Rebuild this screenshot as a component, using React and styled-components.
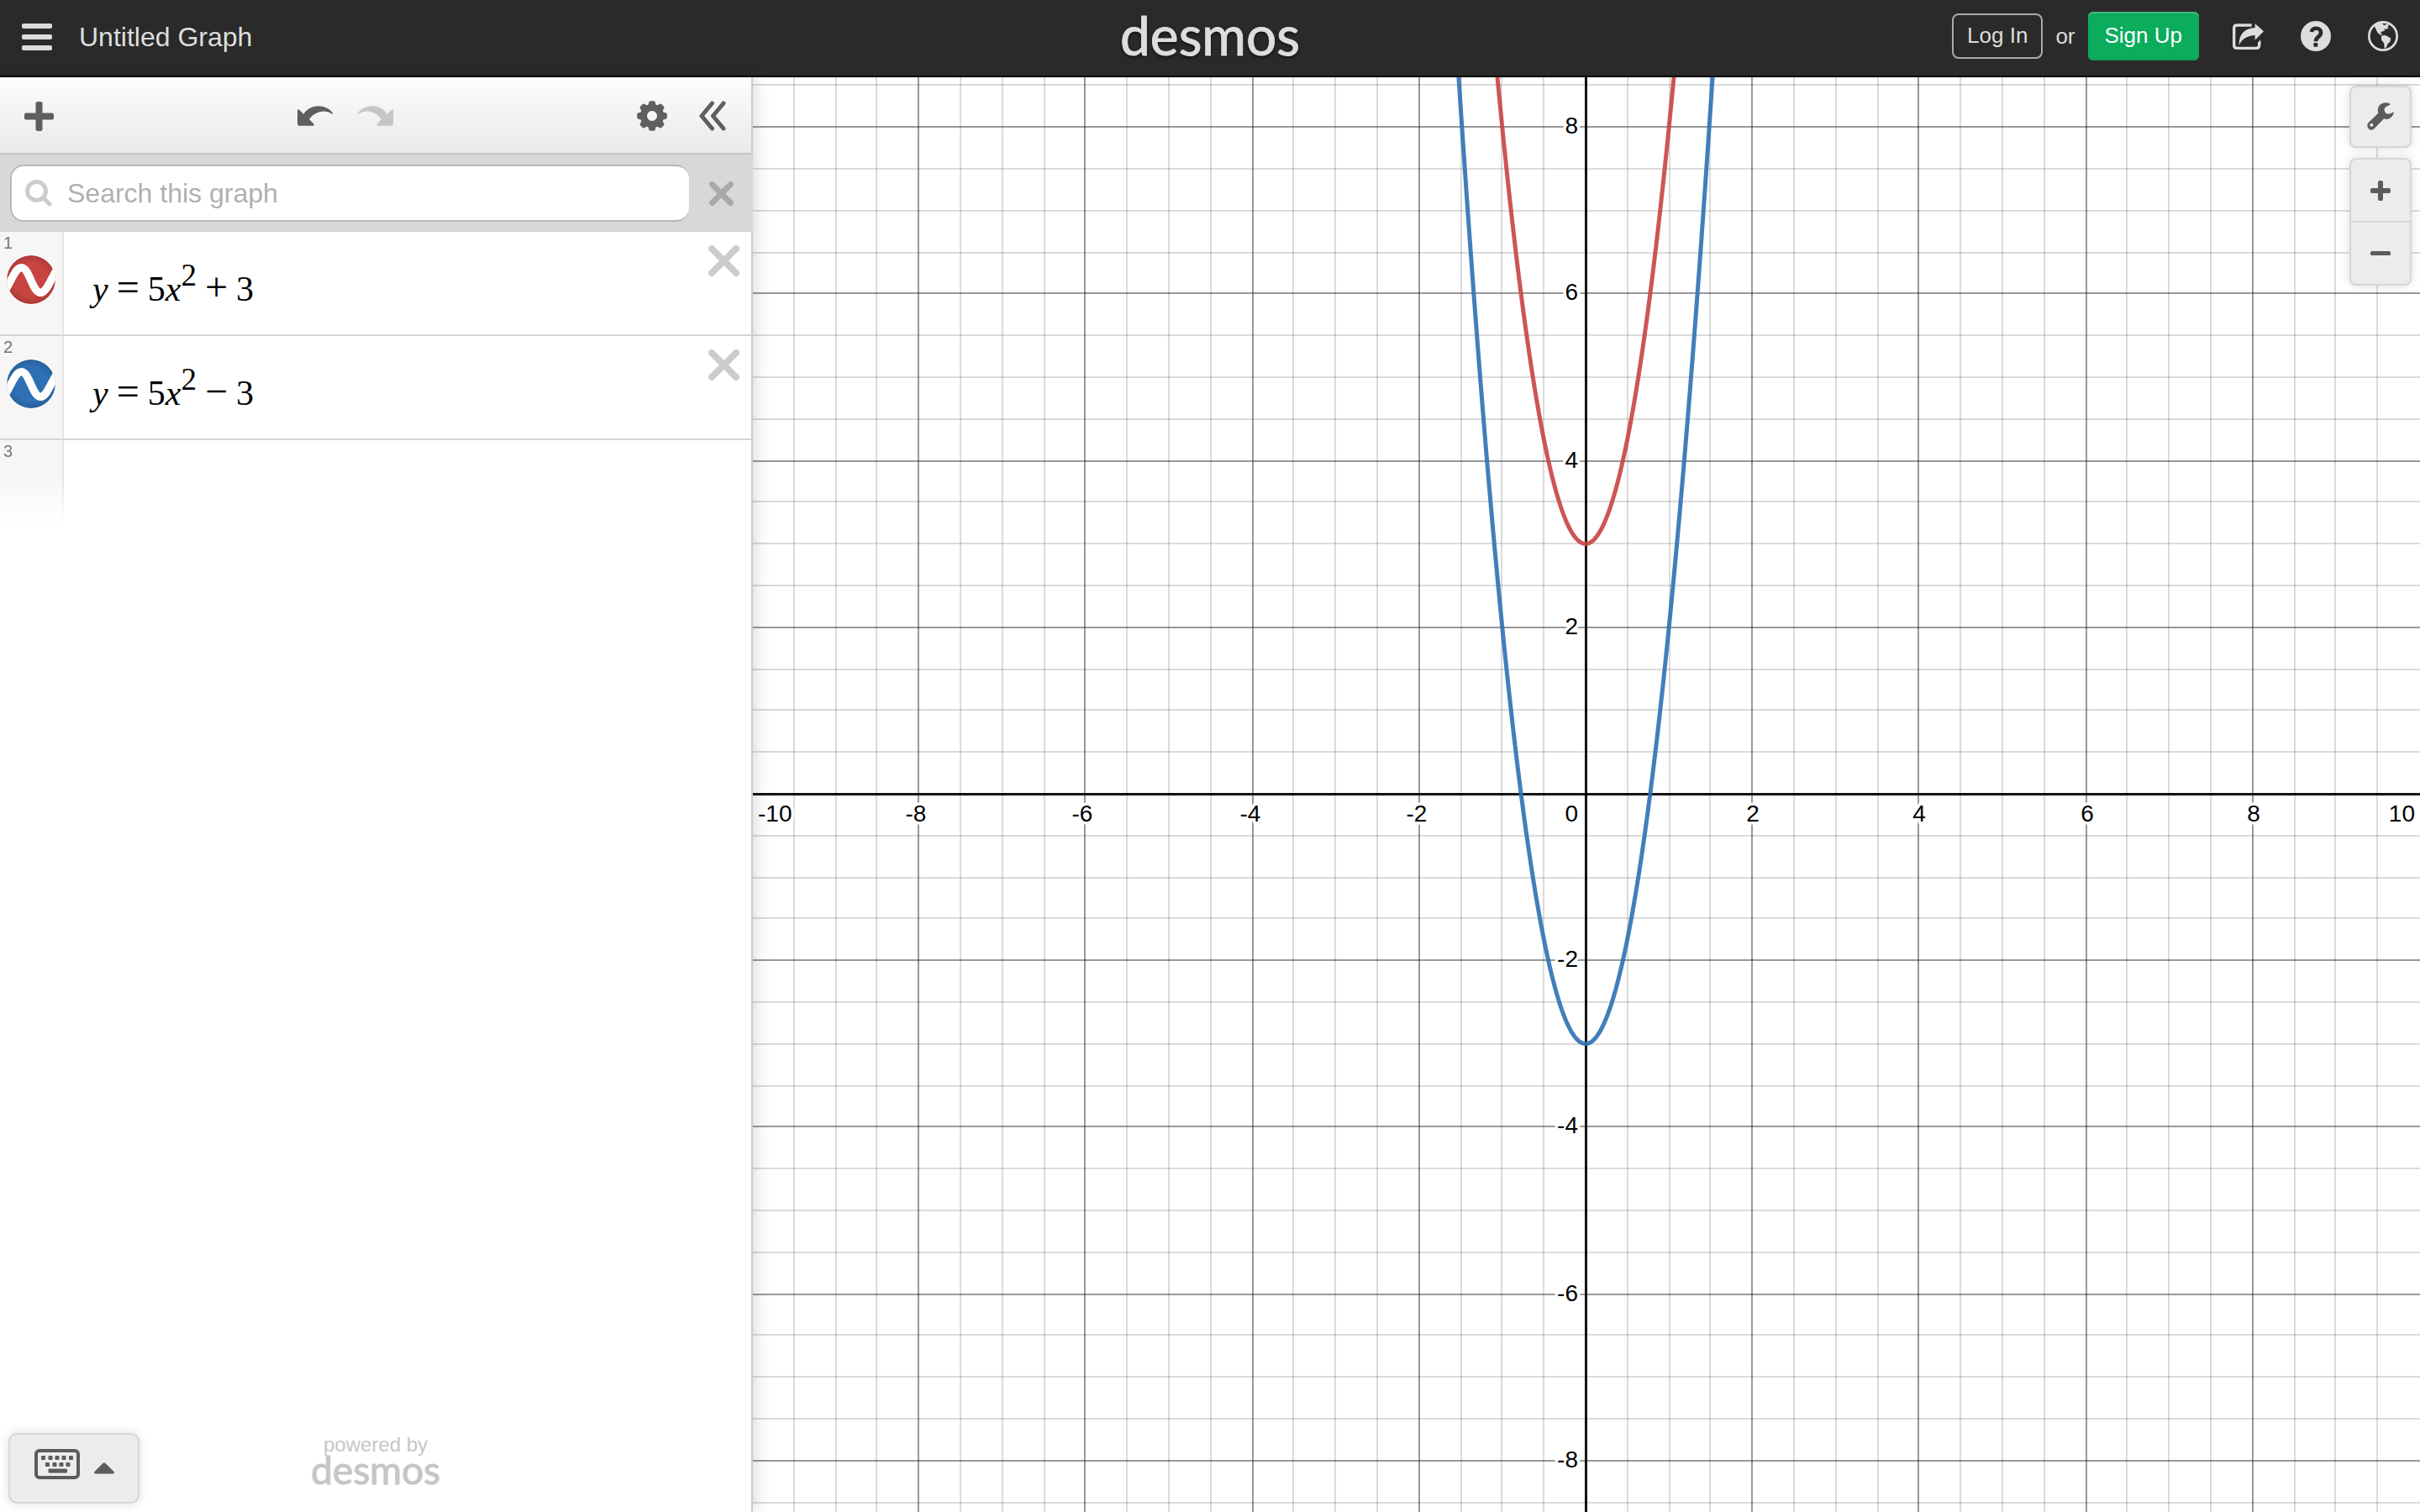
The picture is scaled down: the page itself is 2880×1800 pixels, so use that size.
import React, { useLayoutEffect, useRef, useState } from "react";
import styled, { createGlobalStyle, css } from "styled-components";

const GlobalStyle = createGlobalStyle`
  *, *::before, *::after { box-sizing: border-box; }
  body {
    margin: 0;
    background: #fff;
    font-family: "Liberation Sans", Arial, sans-serif;
  }
  button {
    margin: 0;
    padding: 0;
    border: 0;
    background: none;
    font: inherit;
    color: inherit;
    cursor: pointer;
  }
`;

const Page = styled.div`
  display: flex;
  flex-direction: column;
  height: 100vh;
  overflow: hidden;
`;

/* ---------- header ---------- */

const Header = styled.header`
  flex: none;
  display: grid;
  grid-template-columns: 1fr auto 1fr;
  align-items: center;
  height: 92px;
  padding: 0 26px;
  border-bottom: 2px solid #000;
  background: #2a2a2a;
  color: #ddd;
`;

const HeaderStart = styled.div`
  display: flex;
  align-items: center;
  gap: 32px;
  padding-bottom: 2px;
`;

const HeaderEnd = styled.div`
  display: flex;
  align-items: center;
  justify-content: flex-end;
  gap: 44px;
  padding-bottom: 4px;
`;

const GraphTitle = styled.h1`
  margin: 0;
  font-size: 32px;
  font-weight: 400;
  line-height: 40px;
`;

const Wordmark = styled.span`
  font-family: Lato, "Open Sans", sans-serif;
  font-weight: 400;
  ${(p) =>
    p.$large
      ? css`
          font-size: 64px;
          line-height: 64px;
          height: 70px;
          color: #ddd;
          -webkit-text-stroke: 1px #ddd;
          text-shadow: 0 2px 4px rgba(0, 0, 0, 0.7);
        `
      : css`
          font-size: 46px;
          line-height: 32px;
          color: #c6c6c6;
          -webkit-text-stroke: 1px #c6c6c6;
        `}
`;

const Account = styled.div`
  display: flex;
  align-items: center;
  gap: 15px;
  margin-right: -4px;
  font-size: 26px;
`;

const LogInButton = styled.button`
  height: 54px;
  padding: 0 16px 2px;
  border: 2px solid #aaa;
  border-radius: 8px;
`;

const SignUpButton = styled.button`
  height: 58px;
  padding: 0 20px 2px;
  border-radius: 6px;
  background: #0bac5c;
  box-shadow: inset 0 2px 0 #41b87c, inset 0 -2px 0 #109c57;
  color: #fff;
`;

const IconButton = styled.button`
  display: flex;
  align-items: center;
  justify-content: center;
`;

/* ---------- expression panel ---------- */

const Main = styled.main`
  flex: 1;
  display: flex;
  min-height: 0;
`;

const Panel = styled.section`
  position: relative;
  z-index: 1;
  flex: none;
  display: flex;
  flex-direction: column;
  width: 896px;
  border-right: 2px solid #ccc;
  background: #fff;
  box-shadow: 0 0 20px rgba(0, 0, 0, 0.2);
`;

const Toolbar = styled.div`
  display: flex;
  justify-content: space-between;
  height: 92px;
  padding: 2px 10px 0;
  border-bottom: 2px solid #c6c6c6;
  background: linear-gradient(#fcfcfc, #eaeaea);
  color: #5f5f5f;
`;

const ToolGroup = styled.div`
  display: flex;
`;

const ToolButton = styled(IconButton)`
  width: 72px;
  color: ${(p) => (p.disabled ? "#c6c6c6" : "#5f5f5f")};
`;

const SearchBar = styled.form`
  display: flex;
  height: 92px;
  margin-right: -2px;
  padding: 12px 0 12px 12px;
  background: #d8d8d8;
`;

const SearchField = styled.label`
  flex: 1;
  display: flex;
  align-items: center;
  gap: 18px;
  padding-left: 16px;
  border: 2px solid #b8b8b8;
  border-right: 0;
  border-radius: 16px;
  background: #fff;
`;

const SearchInput = styled.input`
  flex: 1;
  min-width: 0;
  height: 60px;
  padding: 0;
  border: 0;
  outline: 0;
  background: none;
  font: inherit;
  font-size: 32px;
  color: #333;
  &::placeholder {
    color: #b0b0b0;
    opacity: 1;
  }
`;

const ClearButton = styled(IconButton)`
  width: 76px;
  color: #a9a9a9;
`;

const ExpressionList = styled.ol`
  flex: 1;
  margin: 0;
  padding: 0;
  list-style: none;
`;

const ExpressionRow = styled.li`
  display: grid;
  grid-template-columns: 76px 1fr 66px;
  height: 124px;
  border-bottom: ${(p) => (p.$blank ? "0" : "2px solid #d4d4d4")};
`;

const Gutter = styled.div`
  display: flex;
  flex-direction: column;
  border-right: 2px solid #e4e4e4;
  background: #f6f6f6;
  ${(p) =>
    p.$fading &&
    css`
      height: 100px;
      mask-image: linear-gradient(#000 45%, transparent);
    `}
`;

const RowNumber = styled.span`
  height: 28px;
  padding-left: 4px;
  font-size: 20px;
  line-height: 26px;
  color: #777;
`;

const CurveToggle = styled(IconButton)`
  width: 58px;
  height: 58px;
  margin-left: 8px;
`;

const Formula = styled.div`
  padding: 32px 0 0 34px;
  font-family: "Liberation Serif", "Times New Roman", serif;
  font-size: 42px;
  line-height: 72px;
  color: #000;
  white-space: nowrap;
`;

const Variable = styled.var`
  font-style: italic;
`;

const Operator = styled.span`
  margin: 0 10px;
  font-size: 48px;
  line-height: 1;
`;

const Exponent = styled.sup`
  position: relative;
  top: -18px;
  font-size: 37px;
  line-height: 0;
  vertical-align: baseline;
`;

const DeleteButton = styled(IconButton)`
  height: 68px;
  color: #ccc;
`;

const PanelFooter = styled.footer`
  display: grid;
  grid-template-columns: 1fr auto 1fr;
  align-items: end;
  padding: 0 10px 10px;
`;

const floating = css`
  border: 2px solid #d6d6d6;
  background: #ececec;
  box-shadow: 0 0 12px rgba(0, 0, 0, 0.14);
  color: #5c5c5c;
`;

const KeypadButton = styled.button`
  ${floating}
  display: flex;
  gap: 17px;
  width: 156px;
  height: 84px;
  padding: 17px 0 0 29px;
  border-radius: 10px;
`;

const PoweredBy = styled.a`
  display: flex;
  flex-direction: column;
  align-items: center;
  gap: 2px;
  padding-bottom: 24px;
  font-size: 24px;
  line-height: 24px;
  color: #c6c6c6;
  text-decoration: none;
`;

/* ---------- graph ---------- */

const GraphPaper = styled.section`
  position: relative;
  flex: 1;
  min-width: 0;
`;

const GraphSvg = styled.svg`
  display: block;
  width: 100%;
  height: 100%;
`;

const AxisLabel = styled.text`
  font-family: "Liberation Sans", Arial, sans-serif;
  font-size: 28px;
  fill: #000;
  stroke: #fff;
  stroke-width: 7px;
  stroke-linejoin: round;
  paint-order: stroke;
`;

const GraphControls = styled.div`
  position: absolute;
  top: 10px;
  right: 10px;
  display: flex;
  flex-direction: column;
  gap: 12px;
`;

const ControlCard = styled.div`
  ${floating}
  display: flex;
  flex-direction: column;
  width: 74px;
  border-radius: 8px;
`;

const ControlButton = styled(IconButton)`
  height: ${(p) => (p.$single ? 70 : 73)}px;
  padding-bottom: ${(p) => (p.$single ? 2 : 0)}px;
  & + & {
    height: 75px;
    border-top: 2px solid #d6d6d6;
  }
`;

/* ---------- icons ---------- */

const MenuIcon = () => (
  <svg width="36" height="32" viewBox="0 0 36 32" fill="currentColor">
    <rect width="36" height="6" rx="2" />
    <rect y="13" width="36" height="6" rx="2" />
    <rect y="26" width="36" height="6" rx="2" />
  </svg>
);

const ShareIcon = () => (
  <svg width="37" height="33" viewBox="24 34 111 99">
    <path
      d="M92 43H40Q29 43 29 53V115Q29 125 40 125H108Q119 125 119 115V103"
      fill="none"
      stroke="currentColor"
      strokeWidth="10"
    />
    <path d="M114 106L124 94V112L114 118Z" fill="currentColor" />
    <path
      d="M135 65L104 37V52C70 53 46 72 47 114C58 92 76 80 104 79V96Z"
      fill="currentColor"
      stroke="#2a2a2a"
      strokeWidth="3"
      paintOrder="stroke"
    />
  </svg>
);

const HelpIcon = () => (
  <svg width="36" height="36" viewBox="0 0 108 108">
    <circle cx="54" cy="54" r="54" fill="currentColor" />
    <path
      d="M39 39C40 22 72 21 72 42C72 57 54 55 54 73"
      fill="none"
      stroke="#2a2a2a"
      strokeWidth="14"
    />
    <rect x="46" y="78" width="15" height="14" rx="3" fill="#2a2a2a" />
  </svg>
);

const GlobeIcon = () => (
  <svg width="36" height="36" viewBox="504 30 108 108">
    <circle cx="558" cy="84" r="50" fill="none" stroke="currentColor" strokeWidth="8" />
    <path
      d="M527 48L540 37L560 35L556 41L564 46L570 40L580 44L574 50L578 55L568 60L562 58L564 66L555 67L549 73L556 79L549 80L538 71L533 60Z"
      fill="currentColor"
    />
    <path
      d="M552 84L562 80L573 84L586 92L583 104L575 111L570 124L563 129L562 110L552 97Z"
      fill="currentColor"
    />
  </svg>
);

const PlusIcon = ({ size, bar }) => (
  <svg width={size} height={size} viewBox={`0 0 ${size} ${size}`} fill="currentColor">
    <rect x={(size - bar) / 2} width={bar} height={size} rx="2" />
    <rect y={(size - bar) / 2} width={size} height={bar} rx="2" />
  </svg>
);

const MinusIcon = () => (
  <svg width="24" height="5" viewBox="0 0 24 5" fill="currentColor">
    <rect width="24" height="5" rx="1.500" />
  </svg>
);

const UndoIcon = ({ flipped }) => (
  <svg width="42" height="24" viewBox="1062 370 126 72" fill="currentColor">
    <path
      transform={flipped ? "translate(2250 0) scale(-1 1)" : undefined}
      d="M1062 386Q1065 380 1070 386L1084 399C1110 360 1166 364 1188 396Q1189 401 1183 398C1156 380 1122 394 1104 418L1119 433Q1124 440 1117 441H1069Q1062 441 1062 434Z"
    />
  </svg>
);

const GearIcon = () => (
  <svg width="36" height="36" viewBox="-18 -18 36 36" fill="currentColor">
    <path
      fillRule="evenodd"
      d="M0-14A14 14 0 1 0 0 14A14 14 0 1 0 0-14ZM0-6A6 6 0 1 1 0 6A6 6 0 1 1 0-6Z"
    />
    {[0, 45, 90, 135, 180, 225, 270, 315].map((angle) => (
      <path
        key={angle}
        transform={`rotate(${angle})`}
        d="M-5-12L-3.6-16.6Q-3.2-17.8-2-17.8H2Q3.2-17.8 3.6-16.6L5-12Z"
      />
    ))}
  </svg>
);

const CollapseIcon = () => (
  <svg
    width="32"
    height="36"
    viewBox="0 0 32 36"
    fill="none"
    stroke="currentColor"
    strokeWidth="5"
    strokeLinecap="round"
    strokeLinejoin="round"
  >
    <path d="M15.500 3L3 18L15.500 33M29 3L16.500 18L29 33" />
  </svg>
);

const SearchIcon = () => (
  <svg width="32" height="32" viewBox="0 0 32 32" fill="none" stroke="#ccc" strokeWidth="5">
    <circle cx="13.500" cy="13.500" r="11" />
    <path d="M22 22L29 29" strokeLinecap="round" />
  </svg>
);

const CrossIcon = ({ size, weight }) => (
  <svg
    width={size}
    height={size}
    viewBox={`0 0 ${size} ${size}`}
    stroke="currentColor"
    strokeWidth={weight}
    strokeLinecap="round"
  >
    <path
      d={`M${weight / 2} ${weight / 2}L${size - weight / 2} ${size - weight / 2}M${size - weight / 2} ${weight / 2}L${weight / 2} ${size - weight / 2}`}
    />
  </svg>
);

const WaveIcon = ({ color, id }) => (
  <svg width="58" height="58" viewBox="24 132 174 174">
    <clipPath id={id}>
      <circle cx="111" cy="219" r="87" />
    </clipPath>
    <radialGradient id={`${id}-shade`}>
      <stop offset="0.7" stopColor="#000" stopOpacity="0" />
      <stop offset="1" stopColor="#000" stopOpacity="0.14" />
    </radialGradient>
    <g clipPath={`url(#${id})`}>
      <circle cx="111" cy="219" r="87" fill={color} />
      <circle cx="111" cy="219" r="87" fill={`url(#${id}-shade)`} />
      <path
        d="M22 252C44 214 56 176 77 176C104 176 116 265 145 265C165 265 180 222 204 180"
        fill="none"
        stroke="#fff"
        strokeWidth="28"
      />
    </g>
  </svg>
);

const KeyboardIcon = () => (
  <svg width="54" height="36" viewBox="0 0 54 36" fill="currentColor">
    <rect x="2" y="2" width="50" height="32" rx="4" fill="none" stroke="currentColor" strokeWidth="4" />
    {[8, 16.500, 24.500, 32.500, 41].map((x) => (
      <rect key={x} x={x} y="8" width="5" height="5" rx="1" />
    ))}
    {[13, 21.500, 29.500, 37.500].map((x) => (
      <rect key={x} x={x} y="16" width="5" height="5" rx="1" />
    ))}
    <rect x="16.500" y="23.500" width="22.500" height="5" rx="1" />
  </svg>
);

const CaretIcon = () => (
  <svg width="24" height="30" viewBox="0 0 24 30" fill="currentColor">
    <path d="M10.500 17Q12 15.500 13.500 17L23.500 27Q24.500 29.500 22 29.500H2Q-.5 29.500 .5 27Z" />
  </svg>
);

const WrenchIcon = () => (
  <svg width="32" height="33" viewBox="81 76 96 99" fill="currentColor">
    <path
      fillRule="evenodd"
      d="M165 82C152 74 134 76 126 86C119 94 118 104 121 114L86 148C76 158 86 176 98 174Q104 173 108 168L141 134C158 140 174 129 177 110C168 114 160 119 152 116C141 111 140 98 148 92C153 88 160 87 165 82ZM97 150A6 6 0 1 1 97 162A6 6 0 1 1 97 150Z"
    />
  </svg>
);

/* ---------- data ---------- */

const EXPRESSIONS = [
  { id: 1, operator: "+", constant: 3, color: "#c74440", evaluate: (x) => 5 * x * x + 3 },
  { id: 2, operator: "−", constant: 3, color: "#2d70b3", evaluate: (x) => 5 * x * x - 3 },
];

/* ---------- graph drawing ---------- */

const SPAN = 20;

function useSize() {
  const ref = useRef(null);
  const [size, setSize] = useState({ width: 0, height: 0 });
  useLayoutEffect(() => {
    const measure = () => {
      const box = ref.current.getBoundingClientRect();
      setSize({ width: box.width, height: box.height });
    };
    measure();
    const observer = new ResizeObserver(measure);
    observer.observe(ref.current);
    return () => observer.disconnect();
  }, []);
  return [ref, size];
}

function Graph() {
  const [ref, { width, height }] = useSize();
  const unit = width / SPAN;
  const originX = Math.floor(width / 2) - 1;
  const originY = Math.floor(height / 2) - 1;
  const offset = (k) => Math.sign(k) * 2 * Math.round((Math.abs(k) * unit) / 4);
  const steps = Array.from({ length: 39 }, (_, i) => i - 19).filter((k) => k !== 0);
  const isMajor = (k) => k % 4 === 0;
  const evens = [-10, -8, -6, -4, -2, 2, 4, 6, 8, 10];

  const curve = (fn) => {
    const points = [];
    for (let i = -160; i <= 160; i += 1) {
      const x = i / 100;
      points.push(`${originX + x * unit},${originY - fn(x) * unit}`);
    }
    return points.join(" ");
  };

  const xLabel = (n) => {
    const x = originX + offset(n * 2);
    if (n === -10) return { x: 6, textAnchor: "start" };
    if (n === 10) return { x: width - 6, textAnchor: "end" };
    return { x: n < 0 ? x - 3 : x + 1, textAnchor: "middle" };
  };

  return (
    <GraphSvg ref={ref} role="img" aria-label="Graph of two parabolas">
      {width > 0 && (
        <>
          <g fill="#000">
            {steps.map((k) => (
              <rect
                key={`x${k}`}
                x={originX + offset(k) - 1}
                width="2"
                height={height}
                fillOpacity={isMajor(k) ? 0.4 : 0.14}
              />
            ))}
            {steps.map((k) => (
              <rect
                key={`y${k}`}
                y={originY - offset(k) - 1}
                width={width}
                height="2"
                fillOpacity={isMajor(k) ? 0.4 : 0.14}
              />
            ))}
            <rect x={originX - 1} width="3" height={height} fillOpacity="0.92" />
            <rect y={originY - 1} width={width} height="3" fillOpacity="0.92" />
          </g>
          {evens.map((n) => (
            <AxisLabel key={`lx${n}`} y={originY + 33} {...xLabel(n)}>
              {n}
            </AxisLabel>
          ))}
          {evens
            .filter((n) => Math.abs(n) < 10)
            .map((n) => (
              <AxisLabel
                key={`ly${n}`}
                x={originX - 9}
                y={originY - offset(n * 2) + 8}
                textAnchor="end"
              >
                {n}
              </AxisLabel>
            ))}
          <AxisLabel x={originX - 9} y={originY + 33} textAnchor="end">
            0
          </AxisLabel>
          {EXPRESSIONS.map((item) => (
            <polyline
              key={item.id}
              points={curve(item.evaluate)}
              fill="none"
              stroke={item.color}
              strokeWidth="5"
              strokeOpacity="0.9"
              strokeLinejoin="round"
            />
          ))}
        </>
      )}
    </GraphSvg>
  );
}

function Expression({ item }) {
  return (
    <ExpressionRow>
      <Gutter>
        <RowNumber>{item.id}</RowNumber>
        <CurveToggle aria-label={`Toggle expression ${item.id}`}>
          <WaveIcon color={item.color} id={`wave-${item.id}`} />
        </CurveToggle>
      </Gutter>
      <Formula>
        <Variable>y</Variable>
        <Operator>=</Operator>5<Variable>x</Variable>
        <Exponent>2</Exponent>
        <Operator>{item.operator}</Operator>
        {item.constant}
      </Formula>
      <DeleteButton aria-label={`Delete expression ${item.id}`}>
        <CrossIcon size={37} weight={8} />
      </DeleteButton>
    </ExpressionRow>
  );
}

export default function App() {
  return (
    <Page>
      <GlobalStyle />
      <Header>
        <HeaderStart>
          <IconButton aria-label="Open menu">
            <MenuIcon />
          </IconButton>
          <GraphTitle>Untitled Graph</GraphTitle>
        </HeaderStart>
        <Wordmark $large>desmos</Wordmark>
        <HeaderEnd>
          <Account>
            <LogInButton>Log In</LogInButton>
            <span>or</span>
            <SignUpButton>Sign Up</SignUpButton>
          </Account>
          <IconButton aria-label="Share">
            <ShareIcon />
          </IconButton>
          <IconButton aria-label="Help">
            <HelpIcon />
          </IconButton>
          <IconButton aria-label="Language">
            <GlobeIcon />
          </IconButton>
        </HeaderEnd>
      </Header>
      <Main>
        <Panel>
          <Toolbar>
            <ToolGroup>
              <ToolButton aria-label="Add item">
                <PlusIcon size={35} bar={8} />
              </ToolButton>
            </ToolGroup>
            <ToolGroup>
              <ToolButton aria-label="Undo">
                <UndoIcon />
              </ToolButton>
              <ToolButton aria-label="Redo" disabled>
                <UndoIcon flipped />
              </ToolButton>
            </ToolGroup>
            <ToolGroup>
              <ToolButton aria-label="Edit list">
                <GearIcon />
              </ToolButton>
              <ToolButton aria-label="Hide list">
                <CollapseIcon />
              </ToolButton>
            </ToolGroup>
          </Toolbar>
          <SearchBar role="search" onSubmit={(e) => e.preventDefault()}>
            <SearchField>
              <SearchIcon />
              <SearchInput type="text" aria-label="Search this graph" placeholder="Search this graph" />
            </SearchField>
            <ClearButton type="button" aria-label="Close search">
              <CrossIcon size={29} weight={7} />
            </ClearButton>
          </SearchBar>
          <ExpressionList>
            {EXPRESSIONS.map((item) => (
              <Expression key={item.id} item={item} />
            ))}
            <ExpressionRow $blank>
              <Gutter $fading>
                <RowNumber>3</RowNumber>
              </Gutter>
            </ExpressionRow>
          </ExpressionList>
          <PanelFooter>
            <KeypadButton aria-label="Show keypad">
              <KeyboardIcon />
              <CaretIcon />
            </KeypadButton>
            <PoweredBy href="#">
              powered by
              <Wordmark>desmos</Wordmark>
            </PoweredBy>
          </PanelFooter>
        </Panel>
        <GraphPaper>
          <Graph />
          <GraphControls>
            <ControlCard>
              <ControlButton $single aria-label="Graph settings">
                <WrenchIcon />
              </ControlButton>
            </ControlCard>
            <ControlCard>
              <ControlButton aria-label="Zoom in">
                <PlusIcon size={24} bar={6} />
              </ControlButton>
              <ControlButton aria-label="Zoom out">
                <MinusIcon />
              </ControlButton>
            </ControlCard>
          </GraphControls>
        </GraphPaper>
      </Main>
    </Page>
  );
}
